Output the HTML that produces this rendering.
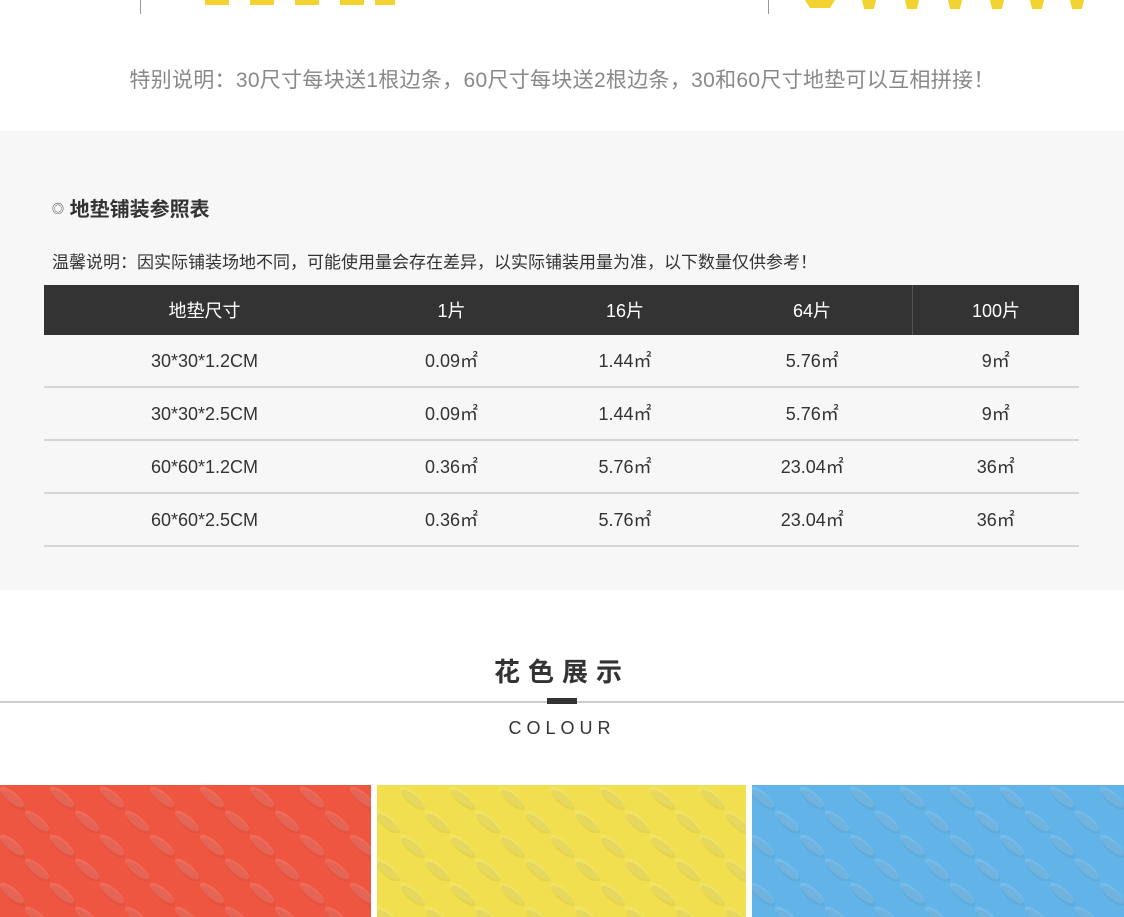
<!DOCTYPE html>
<html><head><meta charset="utf-8"><style>
body{margin:0;width:1124px;height:917px;overflow:hidden;background:#fff;font-family:"Liberation Sans","Noto Sans CJK SC",sans-serif;position:relative}
.a{position:absolute}
table{border-collapse:collapse;position:absolute;left:44px;top:285px;width:1035px;font-size:18px;color:#333}
th{background:#333;color:#fff;font-weight:normal;height:50px;padding:0}
td{text-align:center;height:51px;border-bottom:2px solid #d6d6d6;padding:0;line-height:20px}
</style></head><body>
<div class="a" style="left:0;top:0;width:1124px;height:16px">
<svg width="1124" height="16">
<g fill="#f2d32f"><rect x="140" y="0" width="1" height="14" fill="#999"/>
<rect x="205" y="0" width="24" height="5"/><rect x="250" y="0" width="24" height="5"/><rect x="295" y="0" width="24" height="5"/><rect x="340" y="0" width="24" height="5"/><rect x="375" y="0" width="20" height="5"/>
<rect x="768" y="0" width="1" height="14" fill="#999"/>
<path d="M805 0h30l-5 8h-20z"/><path d="M862 0h14l-2 9h-10z"/><path d="M905 0h14l-2 9h-10z"/><path d="M948 0h14l-2 9h-10z"/><path d="M990 0h14l-2 9h-10z"/><path d="M1030 0h14l-2 9h-10z"/><path d="M1070 0h14l-2 9h-10z"/><path d="M1010 0h14l-2 9h-10z" opacity="0"/></g></svg></div>
<div class="a" style="left:0;width:1124px;top:64px;text-align:center;font-size:21px;color:#888;letter-spacing:0.3px">特别说明：30尺寸每块送1根边条，60尺寸每块送2根边条，30和60尺寸地垫可以互相拼接！</div>
<div class="a" style="left:0;top:131px;width:1124px;height:459px;background:#f7f7f7"></div>
<div class="a" style="left:52px;top:193px;font-size:20px;font-weight:bold;color:#333"><span style="font-size:12px;font-weight:normal;vertical-align:3px">◎</span> 地垫铺装参照表</div>
<div class="a" style="left:52px;top:248px;font-size:17px;color:#333">温馨说明：因实际铺装场地不同，可能使用量会存在差异，以实际铺装用量为准，以下数量仅供参考！</div>
<table>
<tr><th style="width:321px">地垫尺寸</th><th style="width:173px">1片</th><th style="width:174px">16片</th><th style="width:200px;border-right:1px solid #555">64片</th><th>100片</th></tr>
<tr><td>30*30*1.2CM</td><td>0.09㎡</td><td>1.44㎡</td><td>5.76㎡</td><td>9㎡</td></tr>
<tr><td>30*30*2.5CM</td><td>0.09㎡</td><td>1.44㎡</td><td>5.76㎡</td><td>9㎡</td></tr>
<tr><td>60*60*1.2CM</td><td>0.36㎡</td><td>5.76㎡</td><td>23.04㎡</td><td>36㎡</td></tr>
<tr><td>60*60*2.5CM</td><td>0.36㎡</td><td>5.76㎡</td><td>23.04㎡</td><td>36㎡</td></tr>
</table>
<div class="a" style="left:0;width:1124px;top:652px;text-align:center;font-size:26px;font-weight:bold;color:#333;letter-spacing:8px;padding-right:0">花色展示</div>
<div class="a" style="left:0;top:701px;width:1124px;height:2px;background:#ccc"></div>
<div class="a" style="left:547px;top:698px;width:30px;height:6px;background:#333"></div>
<div class="a" style="left:0;width:1124px;top:718px;text-align:center;font-size:18px;color:#333;letter-spacing:5px;padding-right:5px">COLOUR</div>
<svg class="a" style="left:0;top:785px" width="1124" height="132">
<defs>
<pattern id="p" width="50" height="48" patternUnits="userSpaceOnUse">
<ellipse cx="12" cy="12" rx="15" ry="5" transform="rotate(40 12 12)" fill="#fff" opacity=".12"/>
<ellipse cx="37" cy="36" rx="15" ry="5" transform="rotate(40 37 36)" fill="#fff" opacity=".12"/>
<ellipse cx="13" cy="15" rx="15" ry="5" transform="rotate(40 13 15)" fill="#000" opacity=".05"/>
<ellipse cx="38" cy="39" rx="15" ry="5" transform="rotate(40 38 39)" fill="#000" opacity=".05"/>
</pattern></defs>
<rect x="0" y="0" width="371" height="132" fill="#ef5642"/>
<rect x="377" y="0" width="369" height="132" fill="#f1df4f"/>
<rect x="752" y="0" width="372" height="132" fill="#62b3e7"/>
<rect x="0" y="0" width="371" height="132" fill="url(#p)"/>
<rect x="377" y="0" width="369" height="132" fill="url(#p)"/>
<rect x="752" y="0" width="372" height="132" fill="url(#p)"/>
</svg>
</body></html>
